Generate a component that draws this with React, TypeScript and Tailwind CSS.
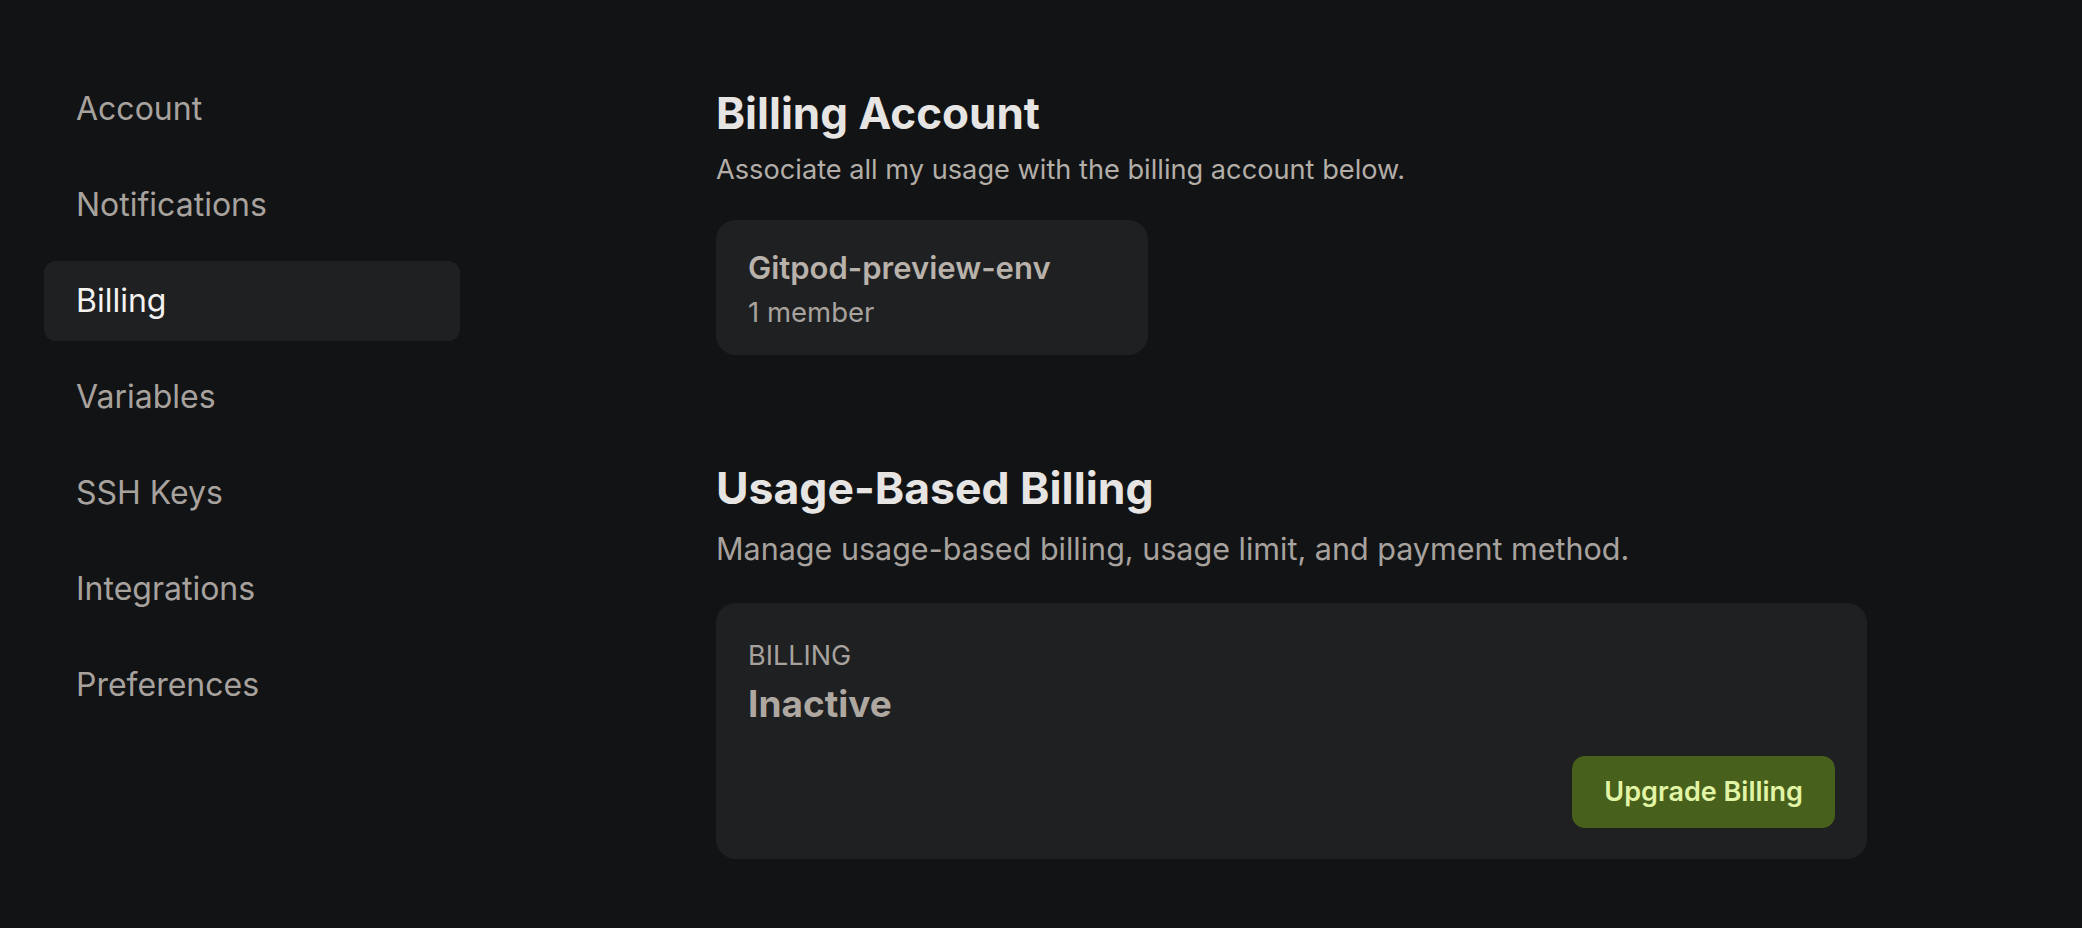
const navItems = [
  "Account",
  "Notifications",
  "Billing",
  "Variables",
  "SSH Keys",
  "Integrations",
  "Preferences",
];

export default function App() {
  return (
    <div className="min-h-[928px] w-full bg-[#121315] font-['Inter',sans-serif] flex">
      {/* sidebar */}
      <nav className="ml-[44px] pt-[69px] w-[416px] flex flex-col gap-4">
        {navItems.map((item) => (
          <div
            key={item}
            className={`h-20 flex items-center pl-8 rounded-xl text-[32px] ${
              item === "Billing" ? "bg-[#1f2022] text-[#f3f2f0]" : "text-[#a8a29e]"
            }`}
          >
            {item}
          </div>
        ))}
      </nav>

      {/* content */}
      <main className="ml-[256px] pt-[86px] flex flex-col">
        <h2 className="text-[44px] leading-[54px] font-bold text-[#e7e5e3]">Billing Account</h2>
        <p className="mt-[14px] text-[27.2px] leading-8 text-[#b3aea8]">
          Associate all my usage with the billing account below.
        </p>

        <div className="mt-[34px] w-[432px] rounded-[20px] bg-[#1f2022] pl-8 pt-[30px] pb-[27px]">
          <div className="text-[31px] leading-9 font-semibold text-[#b8b2ab]">Gitpod-preview-env</div>
          <div className="mt-[10px] text-[27.5px] leading-8 text-[#a8a29e]">1 member</div>
        </div>

        <h2 className="mt-[106px] text-[44.5px] leading-[54px] font-bold text-[#e7e5e3]">Usage-Based Billing</h2>
        <p className="mt-[15px] text-[30.5px] leading-[38px] text-[#a8a29e]">
          Manage usage-based billing, usage limit, and payment method.
        </p>

        <div className="mt-[35px] w-[1151px] rounded-[20px] bg-[#1f2022] px-8 pt-[37px] pb-[31px] flex flex-col">
          <div className="text-[27px] leading-8 text-[#a8a29e] uppercase">Billing</div>
          <div className="mt-[9px] text-[37px] leading-[46px] font-bold text-[#aea8a1]">Inactive</div>
          <div className="mt-[29px] flex justify-end">
            <button className="h-[72px] px-8 rounded-[13px] bg-[#47601c] text-[27px] font-semibold text-[#e2f4a6]">
              Upgrade Billing
            </button>
          </div>
        </div>
      </main>
    </div>
  );
}
